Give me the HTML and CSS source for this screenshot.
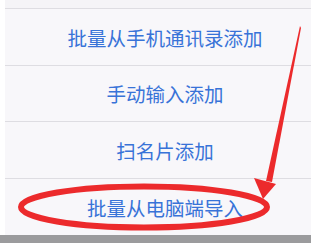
FILE: index.html
```html
<!DOCTYPE html>
<html lang="zh">
<head>
<meta charset="utf-8">
<link rel="stylesheet" href="styles.css">
</head>
<body>
<div class="page">
  <div class="sheet">
    <div class="top"></div>
    <div class="row r57">批量从手机通讯录添加</div>
    <div class="row r56">手动输入添加</div>
    <div class="row r57">扫名片添加</div>
    <div class="row r56 last">批量从电脑端导入</div>
  </div>
  <div class="bar"></div>
  <svg class="marks" width="311" height="244" viewBox="0 0 311 244">
    <ellipse cx="144" cy="207" rx="123" ry="20.5" fill="none" stroke="#ec2a2c" stroke-width="6"/>
    <polygon points="300,26 301,28 272,182 266,181" fill="#ec2a2c"/>
    <polygon points="254,178 276,184 263,199" fill="#ec2a2c"/>
  </svg>
</div>
</body>
</html>
```
FILE: styles.css
```css
html, body {
  margin: 0;
  padding: 0;
  background: #ffffff;
  overflow: hidden;
}
.page {
  position: relative;
  width: 311px;
  height: 244px;
  overflow: hidden;
}
.sheet {
  margin-left: 5px;
  width: 320px;
  background: #f8f7fa;
}
.top {
  height: 9px;
  background: #f5f4f7;
  border-bottom: 1px solid #dedde2;
  box-sizing: border-box;
}
.row {
  display: flex;
  align-items: center;
  justify-content: center;
  box-sizing: border-box;
  border-bottom: 1px solid #dedde2;
  font-family: "Noto Sans CJK SC", "Noto Sans", sans-serif;
  font-size: 19.5px;
  color: #3873d8;
  letter-spacing: 0;
}
.r57 { height: 57px; }
.r56 { height: 56px; }
.row.last { border-bottom: none; }
.bar {
  height: 8px;
  background: #9b9b9d;
}
.marks {
  position: absolute;
  left: 0;
  top: 0;
}
```
